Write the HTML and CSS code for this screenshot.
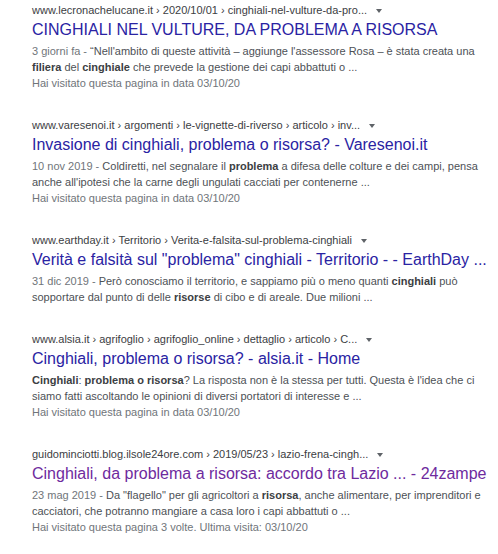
FILE: index.html
```html
<!DOCTYPE html>
<html lang="it">
<head>
<meta charset="utf-8">
<link rel="stylesheet" href="styles.css">
</head>
<body>
<div class="results">
  <div class="result">
    <div class="url">www.lecronachelucane.it › 2020/10/01 › cinghiali-nel-vulture-da-pro... <span class="arrow"></span></div>
    <div class="title">CINGHIALI NEL VULTURE, DA PROBLEMA A RISORSA</div>
    <div class="snippet"><span class="date">3 giorni fa - </span>“Nell'ambito di queste attività – aggiunge l'assessore Rosa – è stata creata una<br><b>filiera</b> del <b>cinghiale</b> che prevede la gestione dei capi abbattuti o ...</div>
    <div class="visited">Hai visitato questa pagina in data 03/10/20</div>
  </div>
  <div class="result">
    <div class="url">www.varesenoi.it › argomenti › le-vignette-di-riverso › articolo › inv... <span class="arrow"></span></div>
    <div class="title">Invasione di cinghiali, problema o risorsa? - Varesenoi.it</div>
    <div class="snippet"><span class="date">10 nov 2019 - </span>Coldiretti, nel segnalare il <b>problema</b> a difesa delle colture e dei campi, pensa<br>anche all'ipotesi che la carne degli ungulati cacciati per contenerne ...</div>
    <div class="visited">Hai visitato questa pagina in data 03/10/20</div>
  </div>
  <div class="result">
    <div class="url">www.earthday.it › Territorio › Verita-e-falsita-sul-problema-cinghiali <span class="arrow"></span></div>
    <div class="title">Verità e falsità sul "problema" cinghiali - Territorio - - EarthDay ...</div>
    <div class="snippet"><span class="date">31 dic 2019 - </span>Però conosciamo il territorio, e sappiamo più o meno quanti <b>cinghiali</b> può<br>sopportare dal punto di delle <b>risorse</b> di cibo e di areale. Due milioni ...</div>
  </div>
  <div class="result">
    <div class="url">www.alsia.it › agrifoglio › agrifoglio_online › dettaglio › articolo › C... <span class="arrow"></span></div>
    <div class="title">Cinghiali, problema o risorsa? - alsia.it - Home</div>
    <div class="snippet"><b>Cinghiali</b>: <b>problema o risorsa</b>? La risposta non è la stessa per tutti. Questa è l'idea che ci<br>siamo fatti ascoltando le opinioni di diversi portatori di interesse e ...</div>
    <div class="visited">Hai visitato questa pagina in data 03/10/20</div>
  </div>
  <div class="result">
    <div class="url">guidominciotti.blog.ilsole24ore.com › 2019/05/23 › lazio-frena-cingh... <span class="arrow"></span></div>
    <div class="title seen">Cinghiali, da problema a risorsa: accordo tra Lazio ... - 24zampe</div>
    <div class="snippet"><span class="date">23 mag 2019 - </span>Da "flagello" per gli agricoltori a <b>risorsa</b>, anche alimentare, per imprenditori e<br>cacciatori, che potranno mangiare a casa loro i capi abbattuti o ...</div>
    <div class="visited">Hai visitato questa pagina 3 volte. Ultima visita: 03/10/20</div>
  </div>
</div>
</body>
</html>
```

FILE: styles.css
```css
html, body {
  margin: 0;
  padding: 0;
  background: #ffffff;
}
body {
  font-family: "Liberation Sans", Arial, sans-serif;
  padding: 1px 0 0 32px;
}
.result {
  margin-bottom: 25px;
}
.url {
  font-size: 11px;
  line-height: 18px;
  color: #3c4043;
  white-space: nowrap;
}
.arrow {
  display: inline-block;
  width: 0;
  height: 0;
  margin-left: 6px;
  vertical-align: middle;
  border-top: 4px solid #5f6368;
  border-left: 3px solid transparent;
  border-right: 3px solid transparent;
}
.title {
  font-size: 16px;
  line-height: 22px;
  color: #2a23a3;
  white-space: nowrap;
}
.title.seen {
  color: #6e2a9e;
}
.snippet {
  margin-top: 2px;
  font-size: 11px;
  line-height: 16px;
  color: #4d5156;
  white-space: nowrap;
}
.snippet b {
  color: #3c4043;
}
.date,
.visited {
  color: #70757a;
}
.visited {
  font-size: 11px;
  line-height: 16px;
  white-space: nowrap;
}
```
